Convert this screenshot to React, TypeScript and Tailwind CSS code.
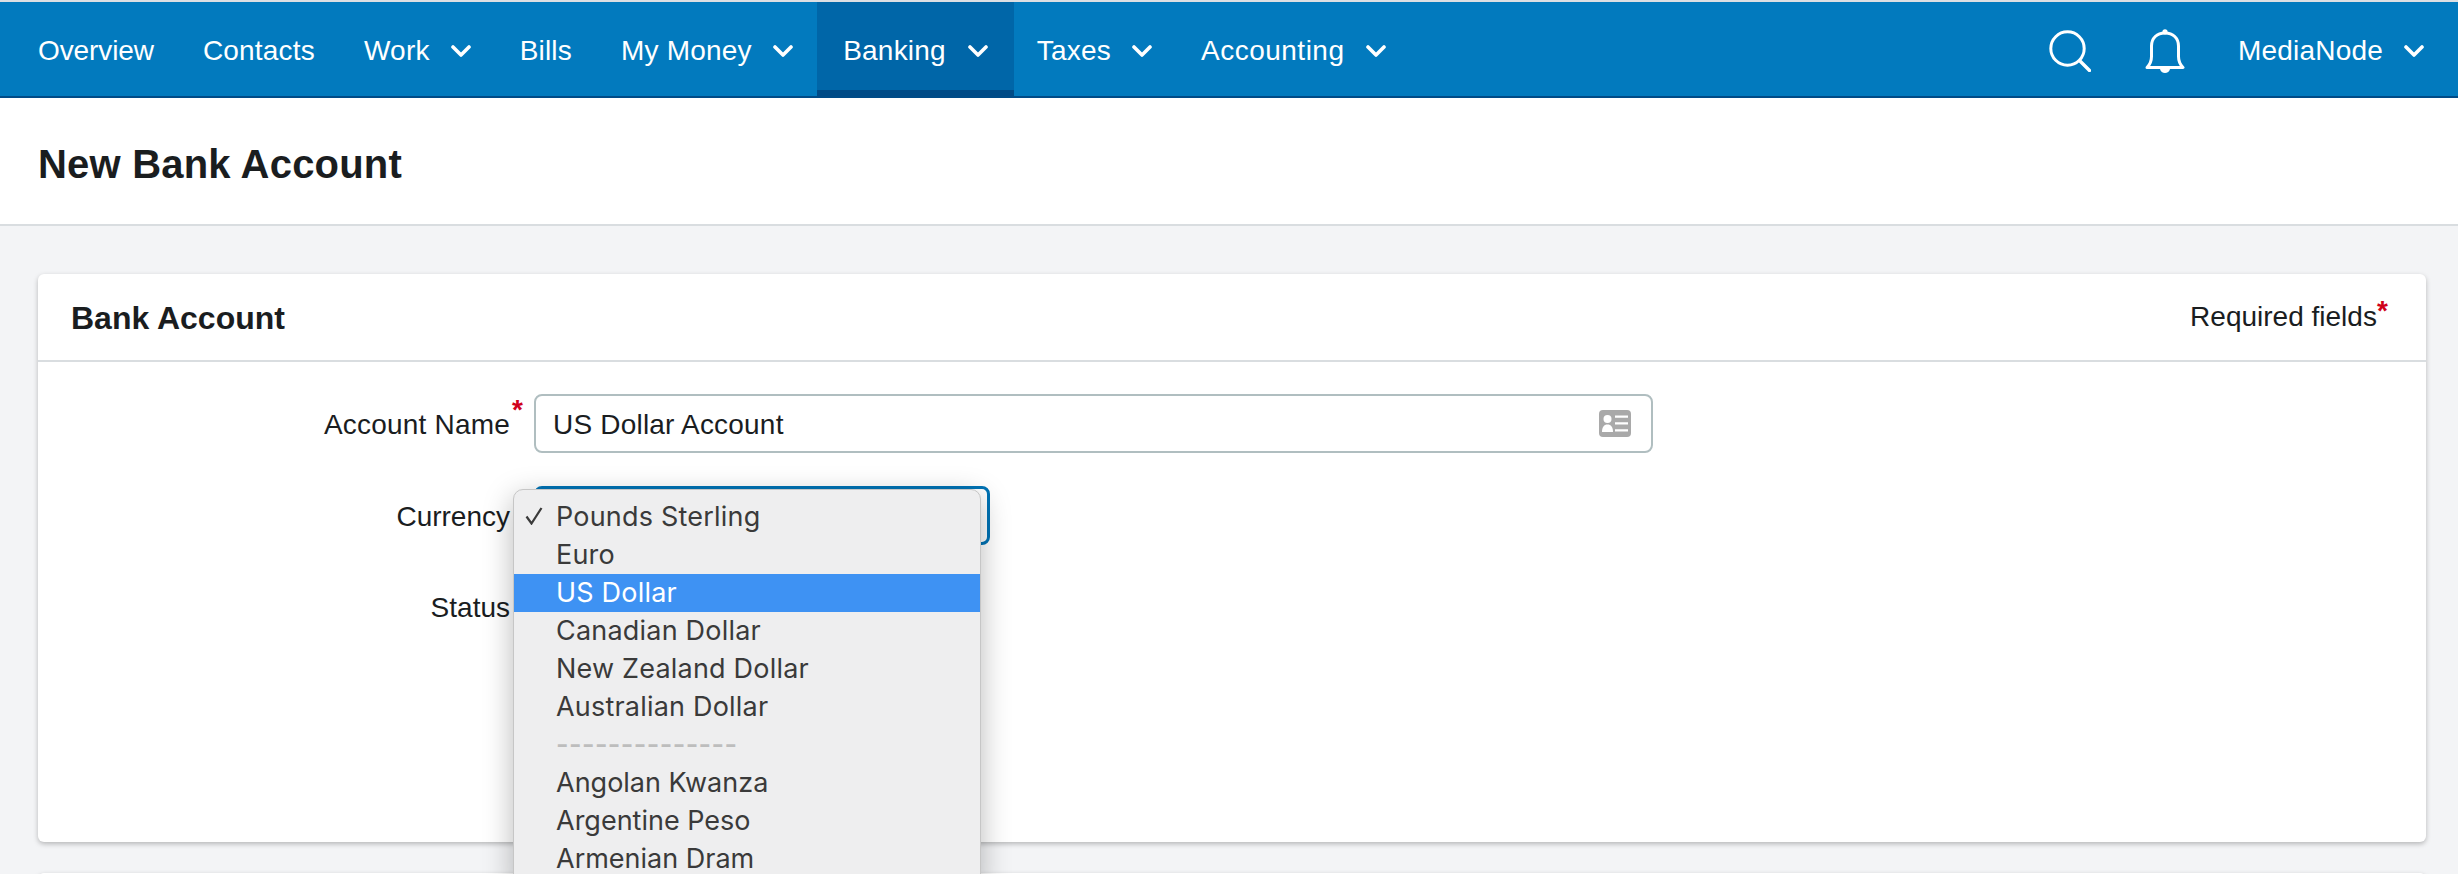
import React from 'react';

const navItems = [
    { label: 'Overview', cls: 'tracking-[-0.1px]' },
    { label: 'Contacts' },
    { label: 'Work', caret: true },
    { label: 'Bills' },
    { label: 'My Money', caret: true },
    { label: 'Banking', caret: true, active: true },
    { label: 'Taxes', caret: true, wrap: 'ml-[-2px]' },
    { label: 'Accounting', caret: true, cls: 'tracking-[0.5px]' },
];

const currencies = ['Pounds Sterling', 'Euro', 'US Dollar', 'Canadian Dollar', 'New Zealand Dollar', 'Australian Dollar'];
const moreCurrencies = ['Angolan Kwanza', 'Argentine Peso', 'Armenian Dram'];

const Caret: React.FC = () => (
    <svg width="20" height="12" viewBox="0 0 20 12" fill="none" className="shrink-0">
        <path d="M2 2l8 8 8-8" stroke="white" strokeWidth="3.6" strokeLinecap="round" strokeLinejoin="round" />
    </svg>
);

const SearchIcon: React.FC = () => (
    <svg width="42" height="42" viewBox="0 0 42 42" fill="none">
        <circle cx="18.5" cy="18.5" r="16.7" stroke="white" strokeWidth="3" />
        <path d="M31 31l9.5 9.5" stroke="white" strokeWidth="3.4" strokeLinecap="round" />
    </svg>
);

const BellIcon: React.FC = () => (
    <svg width="40" height="44" viewBox="0 0 40 44" fill="none">
        <path d="M2 38.5c3-3 4.500-6 4.500-11V17C6.500 9 12 4 20 4s13.500 5 13.500 13v10.500c0 5 1.500 8 4.500 11H2z" stroke="white" strokeWidth="3" strokeLinejoin="round" />
        <circle cx="20" cy="2.800" r="2.600" fill="white" />
        <path d="M15 40h10c-.6 2.400-2.600 4-5 4s-4.400-1.600-5-4z" fill="white" />
    </svg>
);

const CardIcon: React.FC = () => (
    <svg width="32" height="27" viewBox="0 0 32 27">
        <rect width="32" height="27" rx="4" fill="#a9a9a9" />
        <circle cx="8.500" cy="9" r="4" fill="white" />
        <path d="M3 22c0-5 2-7.500 5.500-7.500S14 17 14 22H3z" fill="white" />
        <path d="M16 5.500h13v2.300H16zM16 12.300h13v2.300H16zM16 19.200h13v2.300H16z" fill="white" />
    </svg>
);

const CheckMark: React.FC = () => (
    <svg width="18" height="18" viewBox="0 0 18 18" fill="none" className="absolute left-[11px] top-[9px]">
        <path d="M1.500 9.500L6.500 16.500L16.500 1" stroke="#3a3a3a" strokeWidth="2.200" />
    </svg>
);

const Star: React.FC = () => <span className="text-[#d0021b] font-bold text-[28px] leading-none">*</span>;

const App: React.FC = () => {
    return (
        <div className="relative h-[874px] overflow-hidden bg-[#f3f4f6] text-[28px] tracking-[0.2px] text-[#1a1d1f] font-['Liberation_Sans',Arial,sans-serif]">
            {/* top nav */}
            <div className="h-[98px] bg-[#027abe] border-t-2 border-t-[#dcdfe3] border-b-2 border-b-[#004b87] flex items-stretch justify-between text-white">
                <nav className="flex items-stretch pl-[13.5px]">
                    {navItems.map(item => (
                        <div
                            key={item.label}
                            className={`flex items-center ${item.active ? 'gap-[22px] pl-[26px] pr-[26.5px] bg-[#0066a8] border-b-[6px] border-b-[#004b87] pt-[10px]' : 'gap-[21px] px-[24.5px] pt-[4px]'} ${item.wrap ?? ''}`}
                        >
                            <span className={item.cls}>{item.label}</span>
                            {item.caret && <Caret />}
                        </div>
                    ))}
                </nav>
                <div className="flex items-center pr-[34px] pt-[4px]">
                    <SearchIcon />
                    <div className="ml-[54px]"><BellIcon /></div>
                    <span className="ml-[53px]">MediaNode</span>
                    <div className="ml-[21px]"><Caret /></div>
                </div>
            </div>

            {/* page title */}
            <div className="h-[128px] bg-white border-b-2 border-b-[#d9dde0] flex items-center px-[38px] pt-[5px]">
                <h1 className="text-[40px] font-bold tracking-[0.2px] text-[#1a1d1f]">New Bank Account</h1>
            </div>

            {/* form card */}
            <div className="mt-[48px] ml-[38px] w-[2388px] h-[568px] bg-white rounded-[6px] shadow-[0_2px_5px_rgba(0,0,0,0.25)]">
                <div className="h-[88px] border-b-2 border-b-[#d9dde0] flex items-center justify-between pl-[33px] pr-[38px]">
                    <h2 className="text-[32px] font-bold tracking-normal pt-[2px]">Bank Account</h2>
                    <div className="flex items-start">
                        <span className="mt-[-1px] tracking-normal">Required fields</span>
                        <Star />
                    </div>
                </div>
                <div className="pt-[32px] flex flex-col gap-[33px]">
                    <div className="flex items-center">
                        <label className="w-[472px] text-right relative pt-[2px]">
                            Account Name
                            <span className="absolute left-[474px] top-[-13px]"><Star /></span>
                        </label>
                        <div className="ml-[24px] w-[1119px] h-[59px] border-2 border-[#b0bec0] rounded-[8px] flex items-center justify-between pl-[17px] pr-[20px]">
                            <span className="pt-[2px]">US Dollar Account</span>
                            <CardIcon />
                        </div>
                    </div>
                    <div className="flex items-center">
                        <label className="w-[472px] text-right pt-[2px] tracking-normal">Currency</label>
                        <div className="relative ml-[24px] w-[456px] h-[59px] border-[3px] border-[#0073b5] rounded-[8px]">
                            {/* native dropdown list, open */}
                            <div className="absolute z-10 left-[-24px] top-[0px] w-[468px] h-[400px] pt-[8px] bg-[#eeeeef] border border-[#c6c6c6] rounded-t-[10px] shadow-[0_8px_30px_rgba(0,0,0,0.28)] text-[27px] text-[#3a3a3a] font-['Inter',sans-serif]">
                                {currencies.map((name, i) => (
                                    <div
                                        key={name}
                                        className={`relative h-[38px] flex items-center pl-[42px] ${i === 2 ? 'bg-[#3e92f3] text-white' : ''}`}
                                    >
                                        {i === 0 && <CheckMark />}
                                        {name}
                                    </div>
                                ))}
                                <div className="h-[38px] flex items-center pl-[42px] text-[#bdbdbd] font-semibold tracking-[0.4px]">--------------</div>
                                {moreCurrencies.map(name => (
                                    <div key={name} className="h-[38px] flex items-center pl-[42px] tracking-normal">{name}</div>
                                ))}
                            </div>
                        </div>
                    </div>
                    <div className="flex items-center">
                        <label className="w-[472px] text-right tracking-normal">Status</label>
                        <div className="ml-[24px] w-[400px] h-[59px] border-2 border-[#b0bec0] rounded-[8px]" />
                    </div>
                </div>
            </div>

            {/* next card, only its top edge is in view */}
            <div className="mt-[31px] ml-[38px] w-[2388px] h-[40px] bg-white rounded-[6px] shadow-[0_2px_5px_rgba(0,0,0,0.25)]" />
        </div>
    );
};

export default App;
